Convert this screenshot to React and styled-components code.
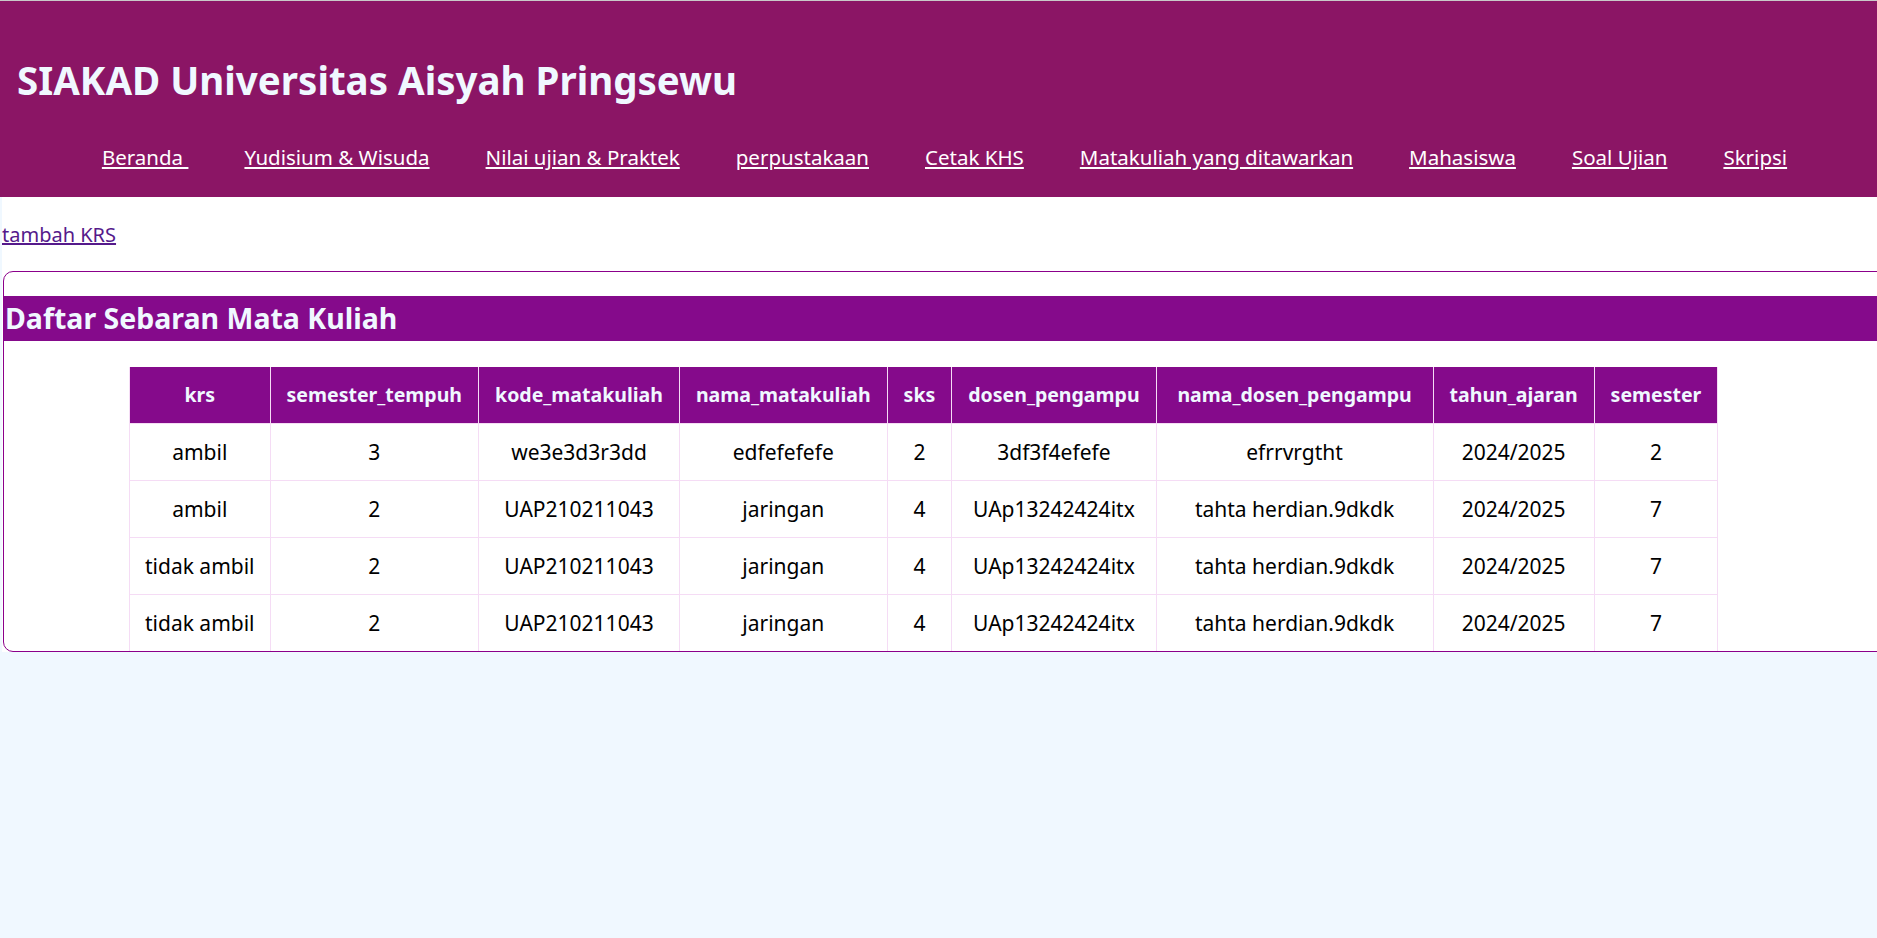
import React from 'react';
import styled, { createGlobalStyle } from 'styled-components';

const GlobalStyle = createGlobalStyle`
    html, body {
        margin: 0;
        padding: 0;
        background: #f0f8ff;
        overflow-x: hidden;
        font-family: 'Noto Sans', 'DejaVu Sans', sans-serif;
    }
`

const Header = styled.header`
    background: #8b1565;
    padding: 52px 0 25px 0;
    border-top: 1px solid #c9c9c9;
`

const Title = styled.h1`
    margin: 0 0 0 17px;
    color: #f0f8ff;
    font-size: 38.5px;
    line-height: 55px;
    font-weight: bold;
`

const Nav = styled.nav`
    display: flex;
    justify-content: center;
    gap: 56px;
    margin-top: 34px;
    padding-left: 12px;
`

const NavLink = styled.a`
    color: #ffffff;
    font-size: 20.5px;
    line-height: 30px;
    text-decoration: underline;
    white-space: pre;
`

const Main = styled.main`
    background: #ffffff;
    margin-left: 2px;
    padding-top: 24px;
`

const AddLink = styled.a`
    display: inline-block;
    color: #551a8b;
    font-size: 20px;
    line-height: 28px;
    margin-bottom: 22px;
`

const Card = styled.section`
    border: 1px solid #8b008b;
    border-radius: 10px;
    margin-left: 1px;
    width: calc(100% + 40px);
    padding-top: 24px;
`

const Band = styled.h2`
    margin: 0 0 26px 0;
    background: #850a8b;
    color: #f0f8ff;
    font-size: 28.5px;
    font-weight: bold;
    line-height: 45px;
    padding-left: 1px;
`

const Table = styled.table`
    border-collapse: collapse;
    margin-left: 125px;
`

const Th = styled.th`
    background: #850a8b;
    color: #f0f8ff;
    font-size: 19.5px;
    line-height: 28px;
    font-weight: bold;
    padding: 14px 16px;
    border: 1px solid #f5dcf5;
    border-top: none;
    white-space: nowrap;
    min-width: ${p => p.$min || 0}px;
`

const Td = styled.td`
    text-align: center;
    color: #000;
    font-size: 21px;
    line-height: 30px;
    padding: 13px 15px;
    border: 1px solid #f5dcf5;
    border-bottom: ${p => (p.$last ? 'none' : '1px solid #f5dcf5')};
    white-space: nowrap;
`

const menu = [
    'Beranda ',
    'Yudisium & Wisuda',
    'Nilai ujian & Praktek',
    'perpustakaan',
    'Cetak KHS',
    'Matakuliah yang ditawarkan',
    'Mahasiswa',
    'Soal Ujian',
    'Skripsi',
];

const columns = [
    { name: 'krs' },
    { name: 'semester_tempuh' },
    { name: 'kode_matakuliah' },
    { name: 'nama_matakuliah' },
    { name: 'sks' },
    { name: 'dosen_pengampu' },
    { name: 'nama_dosen_pengampu', min: 244 },
    { name: 'tahun_ajaran' },
    { name: 'semester' },
];

const rows = [
    ['ambil', '3', 'we3e3d3r3dd', 'edfefefefe', '2', '3df3f4efefe', 'efrrvrgtht', '2024/2025', '2'],
    ['ambil', '2', 'UAP210211043', 'jaringan', '4', 'UAp13242424itx', 'tahta herdian.9dkdk', '2024/2025', '7'],
    ['tidak ambil', '2', 'UAP210211043', 'jaringan', '4', 'UAp13242424itx', 'tahta herdian.9dkdk', '2024/2025', '7'],
    ['tidak ambil', '2', 'UAP210211043', 'jaringan', '4', 'UAp13242424itx', 'tahta herdian.9dkdk', '2024/2025', '7'],
];

export default function App() {
    return (
        <>
            <GlobalStyle />
            <Header>
                <Title>SIAKAD Universitas Aisyah Pringsewu</Title>
                <Nav>
                    {menu.map(m => (
                        <NavLink key={m} href="#">{m}</NavLink>
                    ))}
                </Nav>
            </Header>
            <Main>
                <AddLink href="#">tambah KRS</AddLink>
                <Card>
                    <Band>Daftar Sebaran Mata Kuliah</Band>
                    <Table>
                        <thead>
                            <tr>
                                {columns.map(c => <Th key={c.name} $min={c.min}>{c.name}</Th>)}
                            </tr>
                        </thead>
                        <tbody>
                            {rows.map((r, i) => (
                                <tr key={i}>
                                    {r.map((v, j) => (
                                        <Td key={j} $last={i === rows.length - 1}>{v}</Td>
                                    ))}
                                </tr>
                            ))}
                        </tbody>
                    </Table>
                </Card>
            </Main>
        </>
    )
}
